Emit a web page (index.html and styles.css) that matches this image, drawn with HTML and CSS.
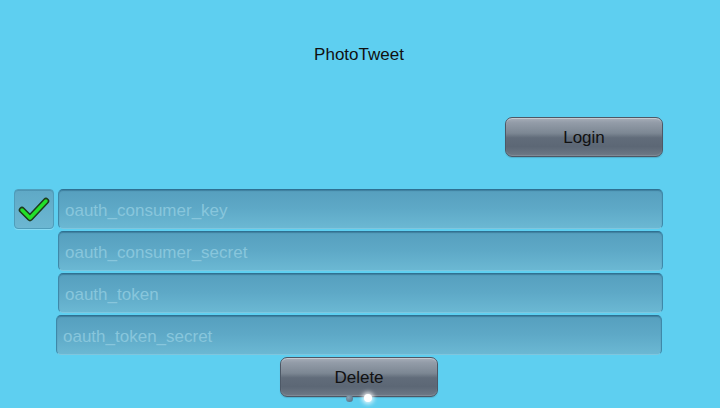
FILE: index.html
```html
<!DOCTYPE html>
<html>
<head>
<meta charset="utf-8">
<link rel="stylesheet" href="styles.css">
</head>
<body>
<div class="app">
  <div class="title">PhotoTweet</div>
  <div class="login-row">
    <button class="btn">Login</button>
  </div>
  <div class="form">
    <div class="check">
      <svg width="40" height="40" viewBox="0 0 40 40">
        <polyline points="8,21 16,29 32,12" fill="none" stroke="#1d3a1d" stroke-width="6.5" stroke-linecap="round" stroke-linejoin="round"/>
        <polyline points="8,21 16,29 32,12" fill="none" stroke="#22e02a" stroke-width="3.5" stroke-linecap="round" stroke-linejoin="round"/>
      </svg>
    </div>
    <div class="field">oauth_consumer_key</div>
    <div></div>
    <div class="field">oauth_consumer_secret</div>
    <div></div>
    <div class="field">oauth_token</div>
    <div></div>
    <div class="field shifted">oauth_token_secret</div>
  </div>
  <div class="delete-row">
    <button class="btn">Delete</button>
  </div>
  <div class="dots">
    <span class="dot"></span>
    <span class="dot active"></span>
  </div>
</div>
</body>
</html>
```

FILE: styles.css
```css
html, body {
  margin: 0;
  padding: 0;
}
body {
  background: #5ecff0;
  font-family: "Liberation Sans", Arial, sans-serif;
  width: 720px;
  height: 408px;
  overflow: hidden;
}
.app {
  position: relative;
  display: flex;
  flex-direction: column;
  height: 408px;
  padding-top: 45px;
  box-sizing: border-box;
}
.title {
  text-align: center;
  font-size: 17px;
  line-height: 20px;
  color: #111;
  padding-right: 2px;
}
.login-row {
  display: flex;
  justify-content: flex-end;
  padding-right: 57px;
  margin-top: 52px;
}
.btn {
  width: 158px;
  height: 40px;
  border: 1px solid #4d5866;
  border-radius: 7px;
  font-family: "Liberation Sans", Arial, sans-serif;
  font-size: 17px;
  color: #111;
  padding: 2px 0 0 0;
  background: linear-gradient(to bottom, #a7aeb8 0%, #939ca8 12%, #7c8793 40%, #616c7a 52%, #5c6775 75%, #6e7986 100%);
  box-shadow: inset 0 1px 0 rgba(255,255,255,0.35), inset 0 -1px 1px rgba(255,255,255,0.15), 0 1px 1px rgba(0,0,0,0.15);
}
.form {
  display: grid;
  grid-template-columns: 40px 605px;
  column-gap: 4px;
  row-gap: 2px;
  margin-left: 14px;
  margin-top: 32px;
}
.check {
  width: 40px;
  height: 40px;
  box-sizing: border-box;
  border: 1px solid #4f9dba;
  border-radius: 4px;
  background: linear-gradient(to bottom, #5fa9c6, #6cb7d2);
  box-shadow: inset 0 1px 0 rgba(40,100,130,0.3), 0 1px 0 rgba(255,255,255,0.25);
}
.check svg {
  display: block;
  margin: -1px;
}
.field {
  height: 40px;
  box-sizing: border-box;
  border: 1px solid #3f88a8;
  border-top-color: #2f7192;
  border-bottom-color: #7fc6de;
  border-radius: 5px;
  background: linear-gradient(to bottom, #569fbe 0%, #5ea9c7 50%, #6bb8d3 100%);
  box-shadow: inset 0 1px 1px rgba(20,70,100,0.35);
  color: #88c6dc;
  font-size: 17px;
  line-height: 38px;
  padding: 2px 0 0 6px;
}
.field.shifted {
  margin-left: -2px;
  margin-right: 1px;
}
.delete-row {
  display: flex;
  justify-content: center;
  margin-top: 2px;
  padding-right: 2px;
}
.dots {
  position: absolute;
  left: 346px;
  top: 394px;
  display: flex;
  gap: 11px;
  align-items: center;
}
.dot {
  width: 7px;
  height: 7px;
  border-radius: 50%;
  background: radial-gradient(circle at 35% 35%, #8aa0b0, #4c6a80);
}
.dot.active {
  width: 8px;
  height: 8px;
  background: #ffffff;
  box-shadow: 0 0 4px 2px rgba(255,255,255,0.8);
}
```
